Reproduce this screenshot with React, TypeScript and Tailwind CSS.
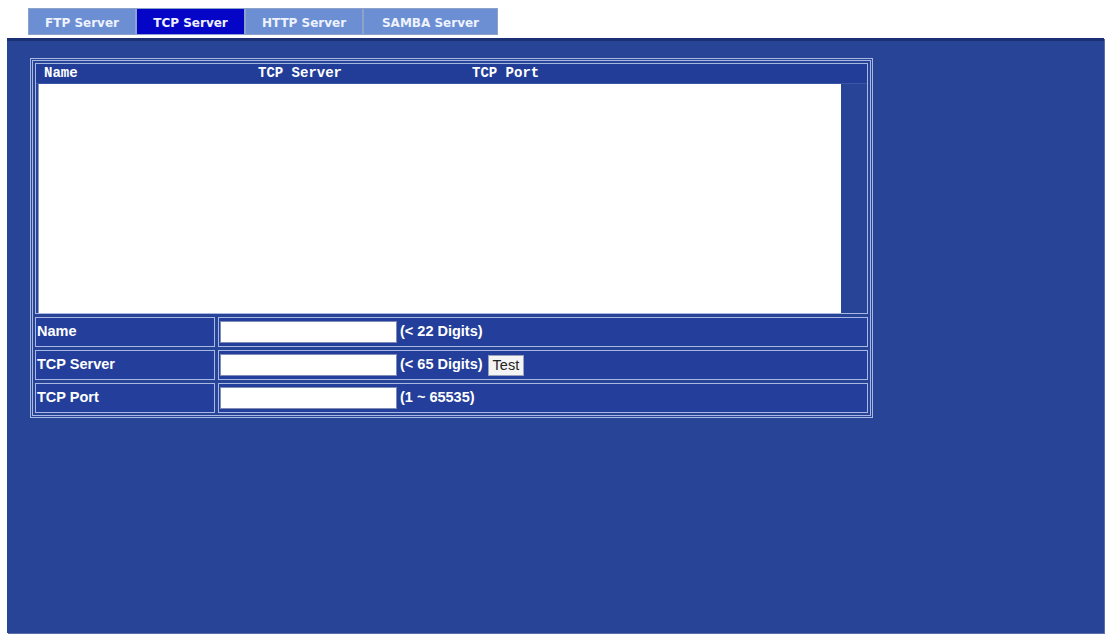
import React from 'react';

const tabs = [
  { name: 'FTP Server', w: 'w-[108px]', active: false },
  { name: 'TCP Server', w: 'w-[109px]', active: true },
  { name: 'HTTP Server', w: 'w-[118px]', active: false },
  { name: 'SAMBA Server', w: 'w-[135px]', active: false },
];

const rows = [
  { label: 'Name', hint: '(< 22 Digits)', test: false },
  { label: 'TCP Server', hint: '(< 65 Digits)', test: true },
  { label: 'TCP Port', hint: '(1 ~ 65535)', test: false },
];

export default function App() {
  return (
    <div className="w-[1109px] h-[640px] bg-white overflow-hidden font-['Liberation_Sans',Arial,sans-serif]">
      {/* tabs */}
      <div className="flex pl-[28px] pt-[8px]">
        {tabs.map(t => (
          <div
            key={t.name}
            className={`${t.w} h-[27px] flex items-center justify-center pt-[2px] border border-[#8da2c8] font-['DejaVu_Sans',sans-serif] text-[12px] font-bold text-[#eef2ff] ${t.active ? 'bg-[#0505c8]' : 'bg-[#6b8fd2]'}`}
          >
            {t.name}
          </div>
        ))}
      </div>

      {/* main panel */}
      <div className="ml-[7px] mt-[3px] w-[1097px] h-[595px] bg-[#284497] border-t-[3px] border-[#1b2f73] shadow-[1px_1px_0_#5b6fa8] pt-[17px] pl-[23px]">
        <div className="w-[843px] border-[3px] border-double border-[#a9b8e3] p-[2px] flex flex-col gap-[3px]">
          {/* list box */}
          <div className="h-[251px] flex border border-[#a9b8e3]">
            <div className="flex-1 flex flex-col">
              <div className="h-[20px] flex items-center bg-[#223d98] font-['Liberation_Mono',monospace] text-[14px] font-bold text-white border-b border-[#3b55a8]">
                <span className="pl-[8px] w-[222px]">Name</span>
                <span className="w-[214px]">TCP Server</span>
                <span>TCP Port</span>
              </div>
              <div className="flex-1 flex pl-[2px]">
                <div className="w-[803px] bg-white border-l border-[#8e9bc0]" />
              </div>
            </div>
          </div>

          {/* form rows */}
          {rows.map(r => (
            <div key={r.label} className="flex gap-[3px] h-[30px]">
              <div className="w-[180px] border border-[#a9b8e3] bg-[#243f9b] flex items-center pl-[1px] text-[14.5px] font-bold text-white">
                {r.label}
              </div>
              <div className="flex-1 border border-[#a9b8e3] bg-[#243f9b] flex items-center pl-[1px] text-[14.5px] font-bold text-white">
                <input className="w-[177px] h-[22px] bg-white border border-[#7f8db5] outline-none" />
                <span className="ml-[3px]">{r.hint}</span>
                {r.test && (
                  <button className="ml-[5px] h-[21px] px-[4px] bg-[#f4f4f4] border border-[#9aa3bb] text-[#222] text-[14.5px] font-normal leading-none">
                    Test
                  </button>
                )}
              </div>
            </div>
          ))}
        </div>
      </div>
    </div>
  );
}
